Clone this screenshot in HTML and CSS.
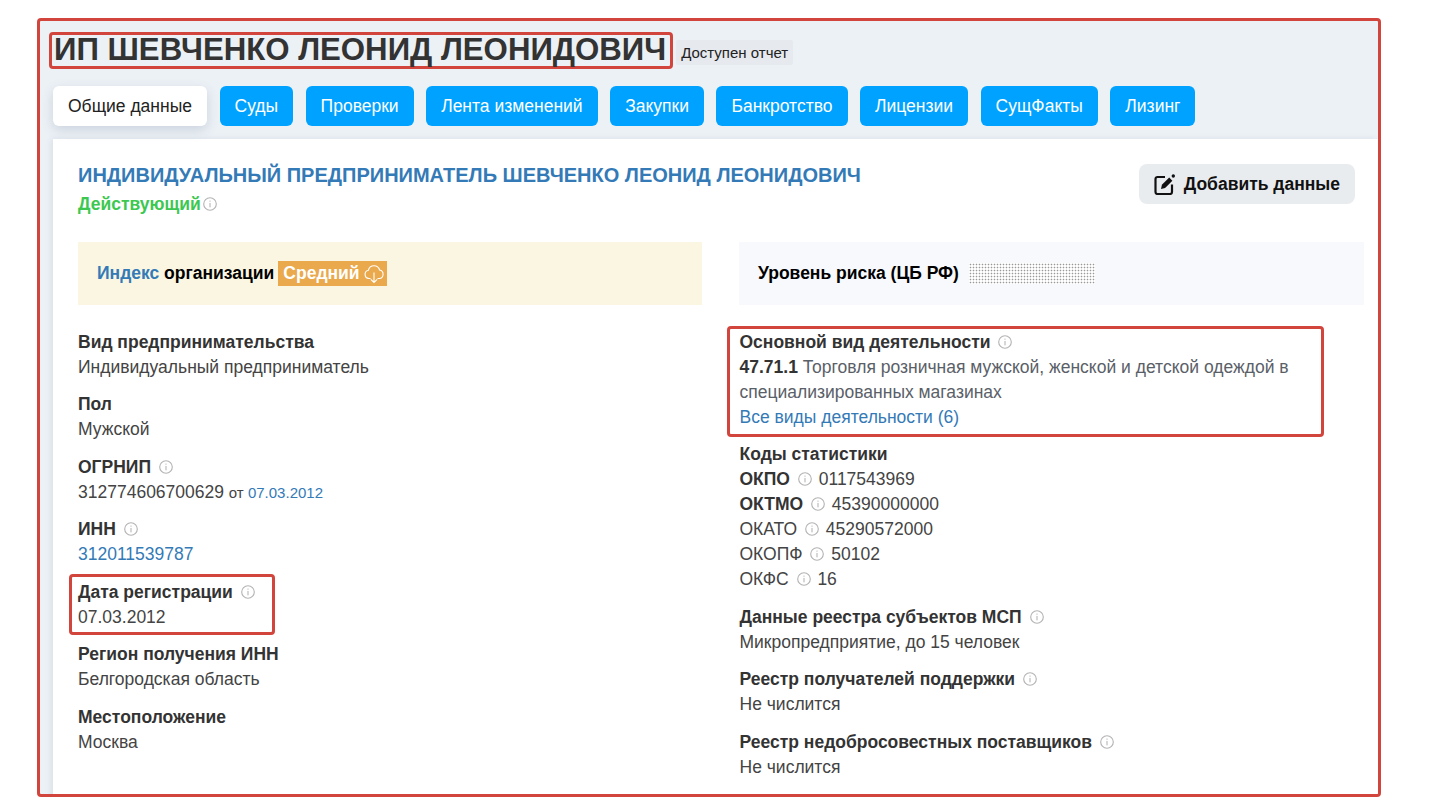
FILE: index.html
```html
<!DOCTYPE html>
<html lang="ru">
<head>
  <meta charset="UTF-8">
  <title>ИП Шевченко Леонид Леонидович</title>
  <link rel="stylesheet" href="styles.css">
</head>
<body>
  <svg class="sprite" aria-hidden="true">
    <symbol id="info" viewBox="0 0 16 16">
      <circle cx="8" cy="8" r="7.2" fill="none" stroke="currentColor" stroke-width="1.3"/>
      <rect x="7.4" y="6.8" width="1.2" height="5" fill="currentColor"/>
      <circle cx="8" cy="4.7" r="0.8" fill="currentColor"/>
    </symbol>
  </svg>

  <div class="frame">
    <header class="top">
      <h1 class="title">ИП ШЕВЧЕНКО ЛЕОНИД ЛЕОНИДОВИЧ</h1>
      <span class="report-tag">Доступен отчет</span>
    </header>

    <nav class="tabs">
      <a class="tab active">Общие данные</a>
      <a class="tab">Суды</a>
      <a class="tab">Проверки</a>
      <a class="tab">Лента изменений</a>
      <a class="tab">Закупки</a>
      <a class="tab">Банкротство</a>
      <a class="tab">Лицензии</a>
      <a class="tab">СущФакты</a>
      <a class="tab">Лизинг</a>
    </nav>

    <main class="panel">
      <div class="panel-head">
        <div>
          <h2 class="org-name">ИНДИВИДУАЛЬНЫЙ ПРЕДПРИНИМАТЕЛЬ ШЕВЧЕНКО ЛЕОНИД ЛЕОНИДОВИЧ</h2>
          <div class="status">Действующий<svg class="info"><use href="#info"/></svg></div>
        </div>
        <button class="add-btn">
          <svg class="add-icon" viewBox="0 0 21 21">
            <path d="M11 3H3.500A2 2 0 0 0 1.500 5v13a2 2 0 0 0 2 2h12.500a2 2 0 0 0 2-2v-7.500" fill="none" stroke="currentColor" stroke-width="2.200"/>
            <path d="M7 15l.9-4.200L15.200 3.500l3.200 3.200-7.300 7.400z" fill="currentColor"/>
            <circle cx="19.300" cy="2" r="1.700" fill="currentColor"/>
          </svg>
          Добавить данные
        </button>
      </div>

      <div class="columns">
        <section class="col">
          <div class="banner banner-index">
            <b><span class="link">Индекс</span> организации</b>
            <span class="level">Средний
              <svg class="cloud" viewBox="0 0 20 20" fill="none" stroke="currentColor" stroke-width="1.100">
                <path d="M6.500 14.500H5a4.200 4.200 0 0 1-.6-8.300 5.800 5.800 0 0 1 11.200-.2 4.300 4.300 0 0 1-.4 8.500h-1.700"/>
                <path d="M10 8.500v10M6.800 15.300l3.200 3.200 3.200-3.200"/>
              </svg>
            </span>
          </div>

          <div class="item">
            <div class="label">Вид предпринимательства</div>
            <div class="value">Индивидуальный предприниматель</div>
          </div>
          <div class="item">
            <div class="label">Пол</div>
            <div class="value">Мужской</div>
          </div>
          <div class="item">
            <div class="label">ОГРНИП <svg class="info"><use href="#info"/></svg></div>
            <div class="value">312774606700629 <small>от <span class="link">07.03.2012</span></small></div>
          </div>
          <div class="item">
            <div class="label">ИНН <svg class="info"><use href="#info"/></svg></div>
            <div class="value link">312011539787</div>
          </div>
          <div class="item">
            <div class="label">Дата регистрации <svg class="info"><use href="#info"/></svg></div>
            <div class="value">07.03.2012</div>
            <span class="mark mark-date"></span>
          </div>
          <div class="item">
            <div class="label">Регион получения ИНН</div>
            <div class="value">Белгородская область</div>
          </div>
          <div class="item">
            <div class="label">Местоположение</div>
            <div class="value">Москва</div>
          </div>
        </section>

        <section class="col col-right">
          <div class="banner banner-risk">
            <b>Уровень риска (ЦБ РФ)</b>
            <span class="dots"></span>
          </div>

          <div class="item">
            <div class="label">Основной вид деятельности <svg class="info"><use href="#info"/></svg></div>
            <div class="value muted"><b class="code">47.71.1</b> Торговля розничная мужской, женской и детской одеждой в специализированных магазинах</div>
            <div class="value link">Все виды деятельности (6)</div>
            <span class="mark mark-okved"></span>
          </div>
          <div class="item">
            <div class="label">Коды статистики</div>
            <div class="value"><b>ОКПО</b> <svg class="info"><use href="#info"/></svg> 0117543969</div>
            <div class="value"><b>ОКТМО</b> <svg class="info"><use href="#info"/></svg> 45390000000</div>
            <div class="value">ОКАТО <svg class="info"><use href="#info"/></svg> 45290572000</div>
            <div class="value">ОКОПФ <svg class="info"><use href="#info"/></svg> 50102</div>
            <div class="value">ОКФС <svg class="info"><use href="#info"/></svg> 16</div>
          </div>
          <div class="item">
            <div class="label">Данные реестра субъектов МСП <svg class="info"><use href="#info"/></svg></div>
            <div class="value">Микропредприятие, до 15 человек</div>
          </div>
          <div class="item">
            <div class="label">Реестр получателей поддержки <svg class="info"><use href="#info"/></svg></div>
            <div class="value">Не числится</div>
          </div>
          <div class="item">
            <div class="label">Реестр недобросовестных поставщиков <svg class="info"><use href="#info"/></svg></div>
            <div class="value">Не числится</div>
          </div>
        </section>
      </div>
    </main>
  </div>
</body>
</html>
```

FILE: styles.css
```css
* { box-sizing: border-box; }
body { margin: 0; background: #fff; font-family: "Liberation Sans", Arial, sans-serif; font-size: 17.500px; color: #333; overflow: hidden; }
.sprite { display: none; }

.frame { width: 1344px; height: 779px; margin: 18px 0 0 37px; border: 3px solid #d2453c; border-radius: 4px; background: #ecf1f6; overflow: hidden; }

.top { display: flex; align-items: center; height: 65px; padding: 0 0 6px 9px; }
.title { margin: 0; padding: 0 4px 0 2px; height: 37px; line-height: 29px; font-size: 31.200px; font-weight: bold; color: #333; border: 3px solid #d2453c; border-radius: 4px; white-space: nowrap; }
.report-tag { margin: 3px 0 0 3px; padding: 3px 5px; font-size: 15px; line-height: 19px; color: #222; background: #e6eaee; border-radius: 2px; }

.tabs { display: flex; gap: 12.500px; padding-left: 13px; }
.tab { height: 40px; padding: 0 15px; line-height: 40px; color: #fff; background: #00a2ff; border-radius: 6px; }
.tab.active { color: #222; background: #fff; box-shadow: 0 4px 12px rgba(60, 80, 110, .18); }

.panel { margin: 13px 0 0 13px; height: 660px; padding: 25px 13px 0 25px; background: #fff; box-shadow: -2px 0 6px rgba(60, 80, 110, .1); }
.panel-head { display: flex; justify-content: space-between; align-items: flex-start; height: 78px; padding-right: 10px; }
.org-name { margin: 0; font-size: 20px; line-height: 23px; font-weight: bold; color: #337ab7; }
.status { margin-top: 7px; line-height: 20px; font-weight: bold; color: #3cc850; }
.status .info { margin: 0 0 0 2px; }
.add-btn { display: flex; align-items: center; gap: 9px; height: 40px; padding: 0 15px; border: 0; border-radius: 8px; background: #e9ecef; font: bold 17.500px "Liberation Sans", Arial, sans-serif; color: #111; }
.add-icon { width: 21px; height: 21px; }

.columns { display: grid; grid-template-columns: 624px 625px; gap: 37px; }
.banner { display: flex; align-items: center; height: 63px; padding-left: 19px; margin-bottom: 24.500px; color: #000; }
.banner-index { background: #fbf6e2; }
.banner-risk { background: #f8f9fc; }
.level { display: inline-flex; align-items: center; gap: 4px; height: 25px; margin-left: 4px; padding: 0 3px 0 5px; font-weight: bold; color: #fff; background: #eaa94c; }
.cloud { width: 20px; height: 20px; }
.dots { width: 126px; height: 21px; margin-left: 10px; background: radial-gradient(circle, #999 0.7px, #fff 1.100px) 0 0 / 3px 3px; }

.item { position: relative; margin-bottom: 12.500px; line-height: 25px; }
.col-right .item { padding-left: 0.500px; }
.label { height: 25px; font-weight: bold; color: #333; }
.value { color: #444; }
.value b { color: #333; }
.muted { color: #5a6068; }
.muted .code { color: #333; }
.value small { font-size: 15px; }
.link { color: #337ab7; }
.info { display: inline-block; width: 14px; height: 14px; margin: 0 3px; vertical-align: -1px; color: #b4b4b4; }
.value .info { margin-right: 2px; }

.mark { position: absolute; border: 3px solid #d2453c; border-radius: 4px; pointer-events: none; }
.mark-date { left: -9px; top: -5.500px; width: 206px; height: 61px; }
.mark-okved { left: -12px; top: -3.500px; width: 597px; height: 111px; }
```
